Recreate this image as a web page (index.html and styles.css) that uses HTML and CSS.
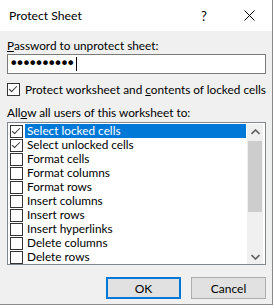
FILE: index.html
```html
<!DOCTYPE html>
<html lang="en">
<head>
  <meta charset="UTF-8">
  <title>Protect Sheet</title>
  <link rel="stylesheet" href="styles.css">
</head>
<body>

<div class="dialog">
  <div class="titlebar">
    <span class="title">Protect Sheet</span>
    <span class="help">?</span>
    <span class="close">
      <svg width="11" height="11" viewBox="0 0 11 11"><path d="M0.5 0.5 L10.5 10.5 M10.5 0.5 L0.5 10.5" stroke="#000" stroke-width="1" fill="none"/></svg>
    </span>
  </div>

  <div class="content">
    <div class="label"><u>P</u>assword to unprotect sheet:</div>
    <div class="password">
      <span class="dots">••••••••••</span><span class="caret"></span>
    </div>

    <div class="check-row">
      <span class="box checked"></span>
      <span>Protect worksheet and <u>c</u>ontents of locked cells</span>
    </div>

    <div class="label allow">All<u>o</u>w all users of this worksheet to:</div>

    <div class="listbox">
      <div class="items">
        <div class="item selected"><span class="box checked"></span><span class="text">Select locked cells</span></div>
        <div class="item"><span class="box checked"></span><span class="text">Select unlocked cells</span></div>
        <div class="item"><span class="box"></span><span class="text">Format cells</span></div>
        <div class="item"><span class="box"></span><span class="text">Format columns</span></div>
        <div class="item"><span class="box"></span><span class="text">Format rows</span></div>
        <div class="item"><span class="box"></span><span class="text">Insert columns</span></div>
        <div class="item"><span class="box"></span><span class="text">Insert rows</span></div>
        <div class="item"><span class="box"></span><span class="text">Insert hyperlinks</span></div>
        <div class="item"><span class="box"></span><span class="text">Delete columns</span></div>
        <div class="item"><span class="box"></span><span class="text">Delete rows</span></div>
      </div>
      <div class="scrollbar">
        <div class="arrow">
          <svg width="9" height="6" viewBox="0 0 9 6"><path d="M0.5 5 L4.5 1 L8.5 5" stroke="#606060" stroke-width="1.6" fill="none"/></svg>
        </div>
        <div class="track"><div class="thumb"></div></div>
        <div class="arrow">
          <svg width="9" height="6" viewBox="0 0 9 6"><path d="M0.5 1 L4.5 5 L8.5 1" stroke="#606060" stroke-width="1.6" fill="none"/></svg>
        </div>
      </div>
    </div>

    <div class="buttons">
      <button class="btn default">OK</button>
      <button class="btn">Cancel</button>
    </div>
  </div>
</div>

</body>
</html>
```

FILE: styles.css
```css
body {
  margin: 0;
  background: #ffffff;
  font-family: Lato, sans-serif;
  font-size: 11.8px;
  color: #000;
}

.dialog {
  width: 272px;
  height: 304px;
  border-right: 1px solid #8a8a8a;
  border-bottom: 1px solid #8a8a8a;
  display: flex;
  flex-direction: column;
  white-space: nowrap;
}

.titlebar {
  height: 31px;
  background: #ffffff;
  display: flex;
  align-items: center;
  padding-left: 9px;
}

.title {
  flex: 1;
  font-size: 12.2px;
}

.help {
  width: 20px;
  text-align: center;
  margin-right: 30px;
  font-size: 13px;
}

.close {
  width: 11px;
  height: 11px;
  margin-right: 17px;
  display: flex;
}

.content {
  flex: 1;
  background: #f0f0f0;
  padding: 6px 6px 0 7px;
}

.label {
  height: 17px;
  line-height: 17px;
}

.password {
  height: 18px;
  background: #fff;
  border: 1px solid #7a7a7a;
  display: flex;
  align-items: center;
  padding-left: 1px;
}

.dots {
  font-family: "DejaVu Sans", sans-serif;
  font-size: 16px;
  line-height: 16px;
  letter-spacing: -3.1px;
}

.caret {
  width: 1px;
  height: 14px;
  background: #000;
  margin-left: 4px;
}

.check-row {
  margin-top: 9px;
  display: flex;
  align-items: center;
  gap: 5px;
  height: 13px;
}

.box {
  width: 11px;
  height: 11px;
  border: 1px solid #333;
  background: #fff;
  flex-shrink: 0;
  position: relative;
}

.box.checked::after {
  content: "";
  position: absolute;
  left: 3px;
  top: 0px;
  width: 3px;
  height: 7px;
  border-right: 1px solid #333;
  border-bottom: 1px solid #333;
  transform: rotate(45deg);
}

.allow {
  margin-top: 8px;
}

.listbox {
  margin-top: 1px;
  height: 140px;
  border: 1px solid #828790;
  background: #fff;
  display: flex;
  padding: 1px 2px 0 2px;
}

.items {
  flex: 1;
  overflow: hidden;
}

.item {
  height: 14px;
  display: flex;
  align-items: center;
}

.item .text {
  flex: 1;
  height: 14px;
  line-height: 14px;
  margin-left: 2px;
  padding-left: 2px;
}

.item.selected .text {
  background: #0078d7;
  color: #fff;
}

.scrollbar {
  width: 16px;
  margin-left: 1px;
  background: #f0f0f0;
  display: flex;
  flex-direction: column;
}

.arrow {
  height: 15px;
  display: flex;
  align-items: center;
  justify-content: center;
}

.track {
  flex: 1;
}

.thumb {
  margin: 2px 1px 0 1px;
  height: 71px;
  background: #cdcdcd;
}

.buttons {
  margin-top: 12px;
  display: flex;
  justify-content: flex-end;
  gap: 10px;
}

.btn {
  width: 75px;
  height: 22px;
  background: #e1e1e1;
  border: 1px solid #adadad;
  font-family: Lato, sans-serif;
  font-size: 12px;
  color: #000;
  padding: 0;
}

.btn.default {
  border: 2px solid #0078d7;
}
```
